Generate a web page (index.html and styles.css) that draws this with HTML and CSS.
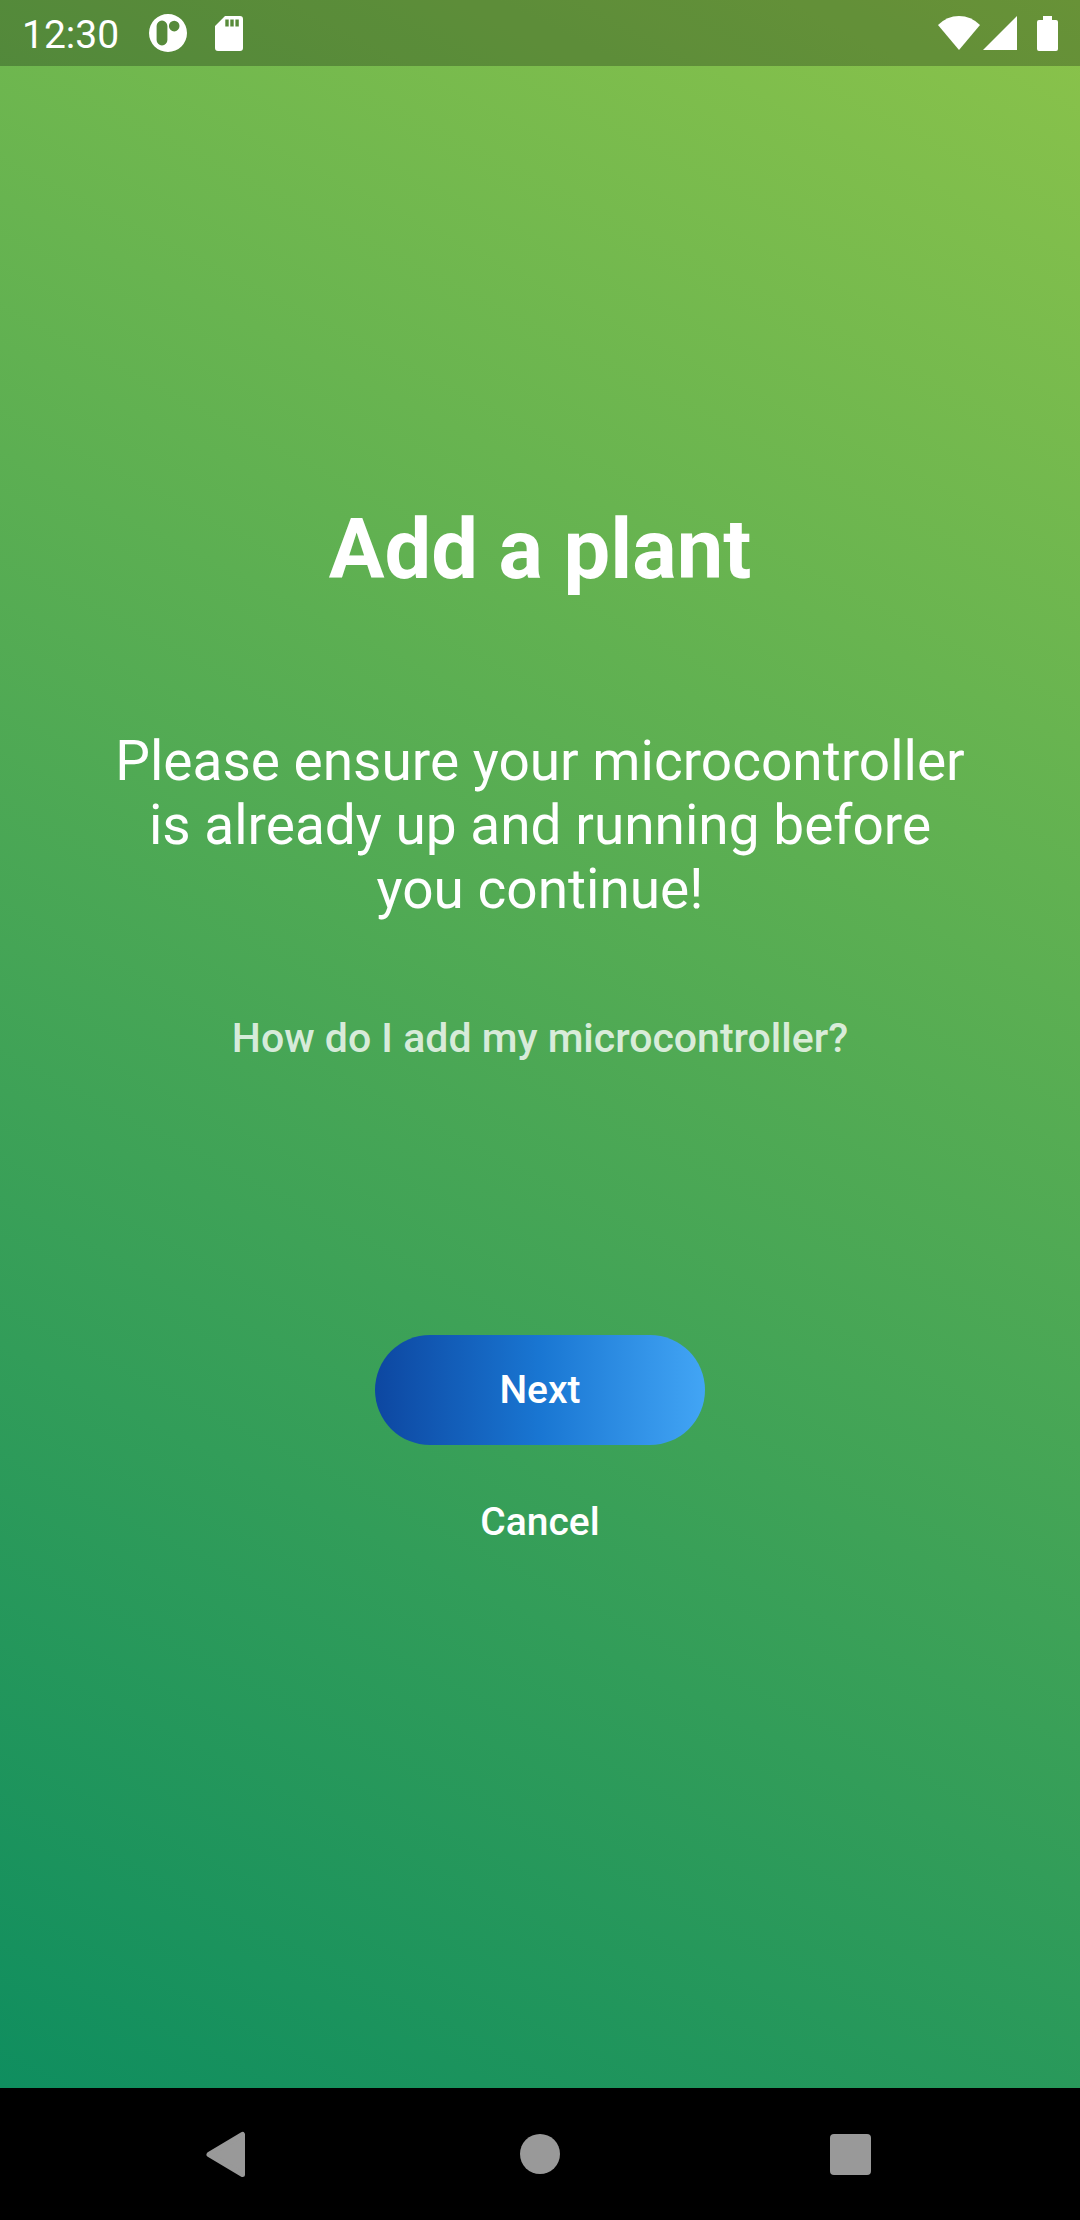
FILE: index.html
```html
<!DOCTYPE html>
<html lang="en">
<head>
<meta charset="utf-8">
<meta name="viewport" content="width=device-width, initial-scale=1">
<title>Add a plant</title>
<link rel="stylesheet" href="styles.css">
</head>
<body>
<div class="screen">
  <div class="page">
    <header class="status">
      <div class="status-group">
        <span class="clock">12:30</span>
        <svg class="app-icon" width="38" height="38" viewBox="0 0 38 38"><path fill="#fff" fill-rule="evenodd" d="M19 0a19 19 0 1 1 0 38a19 19 0 0 1 0-38ZM13 6.600a5.400 5.400 0 0 0-5.400 5.400v14a5.400 5.400 0 0 0 10.800 0V12a5.400 5.400 0 0 0-5.400-5.400ZM25.200 6.800a5.300 5.300 0 1 0 0 10.600a5.300 5.300 0 0 0 0-10.600Z"/></svg>
        <svg class="card-icon" width="28" height="35" viewBox="0 0 28 35"><path fill="#fff" fill-rule="evenodd" d="M10 0H25a3 3 0 0 1 3 3V32a3 3 0 0 1-3 3H3a3 3 0 0 1-3-3V10ZM10.300 3.500v7h3.400v-7ZM15.300 3.500v7h3.400v-7ZM20.400 3.500v7h3.400v-7Z"/></svg>
      </div>
      <div class="status-group">
        <svg width="42" height="34" viewBox="0 0 42 34"><path fill="#fff" d="M0 9Q9 0 21 0T42 9L21 34Z"/></svg>
        <svg class="signal-icon" width="34" height="34" viewBox="0 0 34 34"><path fill="#fff" d="M34 0V34H0Z"/></svg>
        <svg class="battery-icon" width="21" height="35" viewBox="0 0 21 35"><path fill="#fff" d="M6 0h9v4h4a2 2 0 0 1 2 2v27a2 2 0 0 1-2 2H2a2 2 0 0 1-2-2V6a2 2 0 0 1 2-2h4Z"/></svg>
      </div>
    </header>
    <main class="content">
      <h1 class="title">Add a plant</h1>
      <p class="message">Please ensure your microcontroller is already up and running before you continue!</p>
      <a class="help" href="#">How do I add my microcontroller?</a>
      <button class="next" type="button">Next</button>
      <button class="cancel" type="button">Cancel</button>
    </main>
  </div>
  <nav class="navbar" aria-label="System">
    <button class="nav-button" type="button" aria-label="Back"><svg width="48" height="48" viewBox="0 0 48 48"><path fill="#999" d="M37.500 4.500V44.500L4 24.500Z" stroke="#999" stroke-width="5" stroke-linejoin="round"/></svg></button>
    <button class="nav-button" type="button" aria-label="Home"><svg width="48" height="48" viewBox="0 0 48 48"><circle cx="24" cy="24" r="20" fill="#999"/></svg></button>
    <button class="nav-button" type="button" aria-label="Recents"><svg width="48" height="48" viewBox="0 0 48 48"><rect x="3" y="4" width="41" height="41" rx="4" fill="#999"/></svg></button>
  </nav>
</div>
</body>
</html>
```
FILE: styles.css
```css
* {
  box-sizing: border-box;
}

body {
  margin: 0;
  font-family: Roboto, sans-serif;
  color: #fff;
}

button {
  border: 0;
  padding: 0;
  background: none;
  color: inherit;
  font: inherit;
}

svg {
  display: block;
}

.screen {
  display: flex;
  flex-direction: column;
  min-height: 100vh;
}

.page {
  flex: 1;
  display: flex;
  flex-direction: column;
  background: linear-gradient(27deg, #0f8e5f, #8bc34a);
}

.status {
  display: flex;
  justify-content: space-between;
  align-items: center;
  height: 66px;
  padding: 0 22px;
  background: rgba(0, 0, 0, 0.25);
}

.status-group {
  display: flex;
  align-items: center;
}

.clock {
  padding-top: 3px;
  font-size: 39px;
}

.app-icon {
  margin-left: 30px;
}

.card-icon {
  margin-left: 28px;
}

.signal-icon {
  margin-left: 3px;
}

.battery-icon {
  margin-left: 20px;
}

.content {
  flex: 1;
  display: flex;
  flex-direction: column;
  align-items: center;
  padding: 435px 110px 0;
}

.title {
  margin: 0 0 130px;
  font-size: 83px;
  line-height: 98px;
  font-weight: 700;
}

.message {
  margin: 0 0 93px;
  font-size: 55px;
  line-height: 64px;
  text-align: center;
}

.help {
  margin-bottom: 273px;
  color: rgba(255, 255, 255, 0.8);
  font-size: 41px;
  line-height: 48px;
  font-weight: 500;
  text-decoration: none;
}

.next {
  width: 330px;
  height: 110px;
  margin-bottom: 54px;
  border-radius: 55px;
  background: linear-gradient(to right, #0d47a1, #1976d2, #42a5f5);
  font-size: 39px;
  font-weight: 500;
}

.cancel {
  font-size: 39px;
  line-height: 46px;
  font-weight: 500;
}

.navbar {
  display: flex;
  justify-content: center;
  gap: 263px;
  padding: 42px 0;
  background: #000;
}
```
